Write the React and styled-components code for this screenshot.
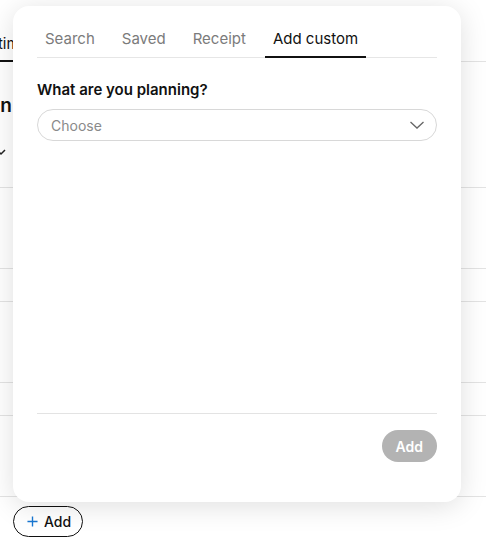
import React from "react";
import styled, { createGlobalStyle } from "styled-components";

const Global = createGlobalStyle`
  html, body { margin: 0; padding: 0; background: #fff; }
  body { font-family: Inter, "Noto Sans", "Liberation Sans", sans-serif; color: #111; }
  * { box-sizing: border-box; }
`;

const Page = styled.div`
  position: relative;
  width: 486px;
  height: 544px;
  overflow: hidden;
  background: #fff;
`;

const Back = styled.div`
  display: flex;
  flex-direction: column;
`;

const BackTabs = styled.div`
  display: flex;
  height: 62px;
  border-bottom: 1px solid #e3e3e3;
`;

const BackTab = styled.div`
  margin-left: -19px;
  padding-top: 34px;
  height: 62px;
  font-size: 15px;
  line-height: 20px;
  color: #111;
  border-bottom: 2px solid #111;
  margin-bottom: -1px;
  white-space: nowrap;
`;

const HeaderBlock = styled.div`
  height: 126px;
  border-bottom: 1px solid #e3e3e3;
  display: flex;
  flex-direction: column;
  padding-top: 32px;
`;

const BackHeading = styled.div`
  margin-left: -28px;
  font-size: 19px;
  line-height: 24px;
  font-weight: 600;
  white-space: nowrap;
`;

const BackChevron = styled.svg`
  margin-top: 30px;
  margin-left: -4px;
`;

const Row = styled.div`
  height: ${(p) => p.$h}px;
  border-bottom: 1px solid #e3e3e3;
`;

const OutlineAdd = styled.button`
  margin: 9px 0 0 13px;
  width: 70px;
  height: 31px;
  border: 1px solid #111;
  border-radius: 16px;
  background: #fff;
  display: flex;
  align-items: center;
  gap: 6px;
  padding: 0 0 0 13px;
  font-family: inherit;
  font-size: 14px;
  font-weight: 500;
  color: #111;
`;

const Card = styled.div`
  position: absolute;
  left: 13px;
  top: 6px;
  width: 448px;
  height: 496px;
  background: #fff;
  border-radius: 16px;
  box-shadow: 0 4px 28px rgba(0, 0, 0, 0.13);
  padding: 14px 24px 40px;
  display: flex;
  flex-direction: column;
`;

const TabList = styled.div`
  display: flex;
  gap: 11px;
  border-bottom: 1px solid #e6e6e6;
`;

const Tab = styled.div`
  padding: 9px 8px 7px;
  font-size: 15px;
  line-height: 20px;
  color: ${(p) => (p.$active ? "#111" : "#7b7b7b")};
  border-bottom: 2px solid ${(p) => (p.$active ? "#111" : "transparent")};
  margin-bottom: -1px;
  white-space: nowrap;
`;

const Label = styled.div`
  margin-top: 22px;
  font-size: 15px;
  line-height: 20px;
  font-weight: 600;
  color: #111;
`;

const Select = styled.div`
  margin-top: 9px;
  height: 32px;
  border: 1px solid #d8d8d8;
  border-radius: 16px;
  display: flex;
  align-items: center;
  justify-content: space-between;
  padding: 0 11px 0 13px;
  font-size: 14px;
  color: #8a8a8a;
`;

const Spacer = styled.div`
  flex: 1;
`;

const Divider = styled.div`
  height: 1px;
  background: #e3e3e3;
`;

const Footer = styled.div`
  display: flex;
  justify-content: flex-end;
  margin-top: 16px;
`;

const AddBtn = styled.button`
  height: 32px;
  padding: 0 14px;
  border: none;
  border-radius: 16px;
  background: #b3b3b3;
  color: #fff;
  font-family: inherit;
  font-size: 14px;
  font-weight: 600;
`;

export default function App() {
  return (
    <>
      <Global />
      <Page>
        <Back>
          <BackTabs>
            <BackTab>Estimating</BackTab>
          </BackTabs>
          <HeaderBlock>
            <BackHeading>Plan</BackHeading>
            <BackChevron width="10" height="8" viewBox="0 0 10 8">
              <path d="M1 2 L5 6 L9 2" fill="none" stroke="#222" strokeWidth="1.5" />
            </BackChevron>
          </HeaderBlock>
          <Row $h={81} />
          <Row $h={33} />
          <Row $h={81} />
          <Row $h={33} />
          <Row $h={81} />
          <OutlineAdd>
            <svg width="11" height="11" viewBox="0 0 12 12">
              <path d="M6 0.5 V11.5 M0.5 6 H11.5" stroke="#1877d2" strokeWidth="1.5" fill="none" />
            </svg>
            Add
          </OutlineAdd>
        </Back>
        <Card>
          <TabList>
            <Tab>Search</Tab>
            <Tab>Saved</Tab>
            <Tab>Receipt</Tab>
            <Tab $active>Add custom</Tab>
          </TabList>
          <Label>What are you planning?</Label>
          <Select>
            <span>Choose</span>
            <svg width="16" height="16" viewBox="0 0 16 16">
              <path d="M1.5 5 L8 11 L14.5 5" fill="none" stroke="#666" strokeWidth="1.3" />
            </svg>
          </Select>
          <Spacer />
          <Divider />
          <Footer>
            <AddBtn>Add</AddBtn>
          </Footer>
        </Card>
      </Page>
    </>
  );
}
